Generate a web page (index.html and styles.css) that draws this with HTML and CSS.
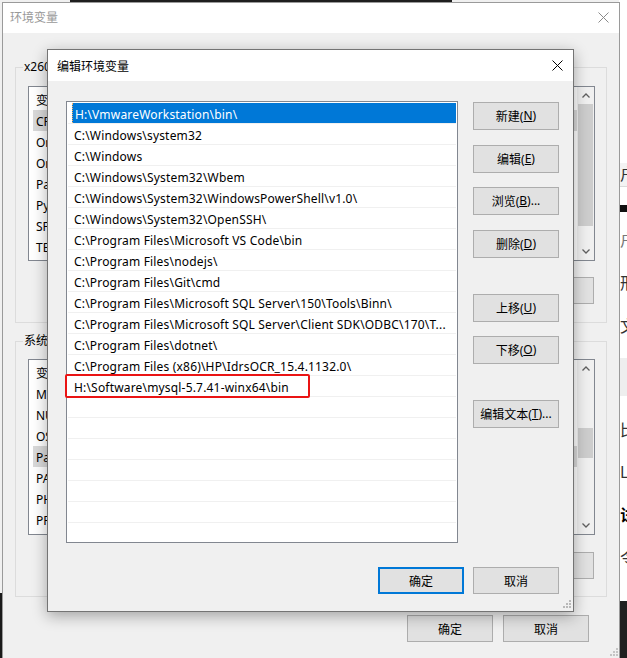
FILE: index.html
```html
<!DOCTYPE html>
<html lang="zh-CN">
<head>
<meta charset="utf-8">
<title>编辑环境变量</title>
<link rel="stylesheet" href="styles.css">
</head>
<body>
<div class="desktop">
  <div class="topline"></div>
  <div class="leftdark"></div>

  <div class="bgwin">
    <div class="bg-gap h163"></div>
    <div class="bg-band"><span class="frag">户</span></div>
    <div class="bg-gap h18"></div>
    <div class="bg-black"></div>
    <div class="bg-gap h7"></div>
    <div class="bg-row gray"><span class="frag">户</span></div>
    <div class="bg-row"><span class="frag">刑</span></div>
    <div class="bg-row"><span class="frag">文</span></div>
    <div class="bg-gap h10"></div>
    <div class="bg-gray"></div>
    <div class="bg-gap h13"></div>
    <div class="bg-row r42"><span class="frag">比</span></div>
    <div class="bg-row r42"><span class="frag">L</span></div>
    <div class="bg-row r44"><span class="frag bold">试</span></div>
    <div class="bg-row r42"><span class="frag">令</span></div>
    <div class="bg-gap h22"></div>
    <div class="bg-dark"></div>
  </div>

  <div class="win outer">
    <div class="o-title">
      <span>环境变量</span>
      <svg class="x" width="11" height="11" viewBox="0 0 11 11"><path d="M0.5 0.5L10.5 10.5M10.5 0.5L0.5 10.5" stroke="#8a8a8a" stroke-width="1"/></svg>
    </div>
    <div class="o-body">
      <div class="group">
        <div class="glabel">x2601 的用户变量(U)</div>
        <div class="olist">
          <div class="olist-rows">
            <div class="orow">变量</div>
            <div class="orow sel">CFLAGS</div>
            <div class="orow">OneDrive</div>
            <div class="orow">OneDriveConsumer</div>
            <div class="orow">Path</div>
            <div class="orow">PyCharm</div>
            <div class="orow">SF_HOME</div>
            <div class="orow">TEMP</div>
          </div>
          <div class="sb">
            <div class="sb-btn"><svg width="8" height="5" viewBox="0 0 8 5"><path d="M0.5 4.5L4 1L7.5 4.5" fill="none" stroke="#606060" stroke-width="1.3"/></svg></div>
            <div class="sb-track"><div class="thumb t1"></div></div>
            <div class="sb-btn"><svg width="8" height="5" viewBox="0 0 8 5"><path d="M0.5 0.5L4 4L7.5 0.5" fill="none" stroke="#606060" stroke-width="1.3"/></svg></div>
          </div>
        </div>
        <div class="obtns">
          <div class="btn">新建(<u>N</u>)...</div>
          <div class="btn">编辑(<u>E</u>)...</div>
          <div class="btn">删除(<u>D</u>)</div>
        </div>
      </div>

      <div class="group g2">
        <div class="glabel">系统变量(S)</div>
        <div class="olist l2">
          <div class="olist-rows">
            <div class="orow">变量</div>
            <div class="orow">MYSQL_HOME</div>
            <div class="orow">NUMBER_OF_PROCESSORS</div>
            <div class="orow">OS</div>
            <div class="orow sel">Path</div>
            <div class="orow">PATHEXT</div>
            <div class="orow">PHP_HOME</div>
            <div class="orow">PROCESSOR_ARCHITECTURE</div>
          </div>
          <div class="sb">
            <div class="sb-btn"><svg width="8" height="5" viewBox="0 0 8 5"><path d="M0.5 4.5L4 1L7.5 4.5" fill="none" stroke="#606060" stroke-width="1.3"/></svg></div>
            <div class="sb-track"><div class="thumb t2"></div></div>
            <div class="sb-btn"><svg width="8" height="5" viewBox="0 0 8 5"><path d="M0.5 0.5L4 4L7.5 0.5" fill="none" stroke="#606060" stroke-width="1.3"/></svg></div>
          </div>
        </div>
        <div class="obtns b2">
          <div class="btn">新建(<u>W</u>)...</div>
          <div class="btn">编辑(<u>I</u>)...</div>
          <div class="btn">删除(<u>L</u>)</div>
        </div>
      </div>

      <div class="ofooter">
        <div class="btn">确定</div>
        <div class="btn">取消</div>
      </div>
    </div>
    <svg class="grip ogrip" width="8" height="8" viewBox="0 0 8 8"><g fill="#c4c4c4"><rect x="6" y="0" width="2" height="2"/><rect x="3" y="3" width="2" height="2"/><rect x="6" y="3" width="2" height="2"/><rect x="0" y="6" width="2" height="2"/><rect x="3" y="6" width="2" height="2"/><rect x="6" y="6" width="2" height="2"/></g></svg>
  </div>

  <div class="win inner">
    <div class="i-title">
      <span>编辑环境变量</span>
      <svg class="x" width="11" height="11" viewBox="0 0 11 11"><path d="M0.5 0.5L10.5 10.5M10.5 0.5L0.5 10.5" stroke="#000" stroke-width="1"/></svg>
    </div>
    <div class="i-body">
      <div class="plist">
        <div class="prow sel"><span class="focus">H:\VmwareWorkstation\bin\</span></div>
        <div class="prow">C:\Windows\system32</div>
        <div class="prow">C:\Windows</div>
        <div class="prow">C:\Windows\System32\Wbem</div>
        <div class="prow">C:\Windows\System32\WindowsPowerShell\v1.0\</div>
        <div class="prow">C:\Windows\System32\OpenSSH\</div>
        <div class="prow">C:\Program Files\Microsoft VS Code\bin</div>
        <div class="prow">C:\Program Files\nodejs\</div>
        <div class="prow">C:\Program Files\Git\cmd</div>
        <div class="prow">C:\Program Files\Microsoft SQL Server\150\Tools\Binn\</div>
        <div class="prow">C:\Program Files\Microsoft SQL Server\Client SDK\ODBC\170\T...</div>
        <div class="prow">C:\Program Files\dotnet\</div>
        <div class="prow">C:\Program Files (x86)\HP\IdrsOCR_15.4.1132.0\</div>
        <div class="prow">H:\Software\mysql-5.7.41-winx64\bin</div>
        <div class="prow"></div>
        <div class="prow"></div>
        <div class="prow"></div>
        <div class="prow"></div>
        <div class="prow"></div>
        <div class="prow"></div>
        <div class="prow"></div>
        <div class="prow"></div>
      </div>
      <div class="side">
        <div class="btn">新建(<u>N</u>)</div>
        <div class="btn m15">编辑(<u>E</u>)</div>
        <div class="btn m14">浏览(<u>B</u>)...</div>
        <div class="btn m15">删除(<u>D</u>)</div>
        <div class="btn m36">上移(<u>U</u>)</div>
        <div class="btn m14">下移(<u>O</u>)</div>
        <div class="btn m36">编辑文本(<u>T</u>)...</div>
      </div>
    </div>
    <div class="i-footer">
      <div class="btn default">确定</div>
      <div class="btn">取消</div>
    </div>
    <svg class="grip igrip" width="8" height="8" viewBox="0 0 8 8"><g fill="#b8b8b8"><rect x="6" y="0" width="2" height="2"/><rect x="3" y="3" width="2" height="2"/><rect x="6" y="3" width="2" height="2"/><rect x="0" y="6" width="2" height="2"/><rect x="3" y="6" width="2" height="2"/><rect x="6" y="6" width="2" height="2"/></g></svg>
  </div>

  <div class="mark"></div>
</div>
</body>
</html>
```

FILE: styles.css
```css
* { box-sizing: border-box; }
body {
  margin: 0;
  font-family: "Noto Sans", "Noto Sans CJK SC", sans-serif;
  font-size: 12px;
  color: #000;
}
u { text-decoration: underline; text-underline-offset: 1px; }

.desktop {
  position: relative;
  width: 627px;
  height: 658px;
  overflow: hidden;
  background: #f0f0f0;
}
.topline {
  position: absolute;
  left: 70px;
  top: 0;
  width: 382px;
  height: 2px;
  background: #1e1e1e;
}
.leftdark {
  position: absolute;
  left: 0;
  top: 593px;
  width: 2px;
  height: 65px;
  background: #1a1a1a;
}

/* background window fragment at the right edge */
.bgwin {
  position: absolute;
  left: 619px;
  top: 0;
  width: 40px;
  height: 658px;
  background: #fff;
  display: flex;
  flex-direction: column;
}
.bg-gap { flex: none; }
.bg-gap.h163 { height: 163px; }
.bg-gap.h18 { height: 18px; }
.bg-gap.h7 { height: 7px; }
.bg-gap.h10 { height: 10px; }
.bg-gap.h13 { height: 13px; }
.bg-gap.h22 { height: 22px; }
.bg-band {
  flex: none;
  height: 24px;
  background: #f3f3f3;
  border-bottom: 1px solid #dadada;
  line-height: 22px;
}
.bg-black { flex: none; height: 7px; background: #111; }
.bg-dark { flex: 1; background: #202020; }
.bg-row { flex: none; height: 43px; line-height: 43px; }
.bg-row.r42 { height: 42px; line-height: 42px; }
.bg-row.r44 { height: 44px; line-height: 44px; }
.bg-row.gray .frag { color: #777; }
.bg-gray { flex: none; height: 38px; background: #eeeeee; }
.frag { display: block; padding-left: 1px; font-size: 16px; color: #333; }
.frag.bold { font-weight: 700; color: #000; }

/* outer window */
.win { position: absolute; }
.outer {
  left: 2px;
  top: 2px;
  width: 618px;
  height: 670px;
  border: 1px solid #9a9a9a;
  background: #f0f0f0;
}
.o-title {
  height: 30px;
  background: #fff;
  display: flex;
  justify-content: space-between;
  align-items: center;
  padding: 0 10px 2px 7px;
  color: #999;
}
.o-body { padding: 34px 12px 0 12px; }

.group {
  border: 1px solid #dcdcdc;
  padding: 0 11px 18px 12px;
}
.group.g2 { margin-top: 18px; padding-bottom: 17px; }
.glabel {
  display: table;
  margin: -9px 0 0 -5px;
  padding: 0 1px;
  background: #f0f0f0;
  line-height: 16px;
}
.olist {
  margin-top: 11px;
  height: 175px;
  border: 1px solid #828790;
  background: #fff;
  display: flex;
}
.olist.l2 { margin-top: 10px; height: 176px; }
.olist-rows { flex: 1; padding-top: 2px; overflow: hidden; }
.orow {
  height: 21px;
  line-height: 23px;
  margin-left: 4px;
  padding-left: 3px;
  white-space: nowrap;
  overflow: hidden;
}
.orow.sel { background: #d9d9d9; }

.sb {
  width: 17px;
  background: #f0f0f0;
  display: flex;
  flex-direction: column;
}
.sb-btn {
  height: 17px;
  display: flex;
  align-items: center;
  justify-content: center;
}
.sb-track { flex: 1; }
.thumb { margin: 0 1px; background: #cdcdcd; }
.thumb.t1 { height: 122px; }
.thumb.t2 { margin-top: 51px; height: 30px; }

.obtns {
  display: flex;
  justify-content: flex-end;
  gap: 10px;
  margin-top: 16px;
  padding-right: 1px;
}
.obtns.b2 { margin-top: 17px; }
.ofooter {
  display: flex;
  justify-content: flex-end;
  gap: 10px;
  margin: 18px 18px 0 0;
}

.btn {
  width: 86px;
  height: 27px;
  border: 1px solid #adadad;
  background: #e1e1e1;
  display: flex;
  align-items: center;
  justify-content: center;
  white-space: nowrap;
  font-size: 12px;
  padding-top: 1px;
}
.btn.default { border: 2px solid #0078d7; }

.grip { position: absolute; }
.ogrip { right: 1px; top: 645px; }
.igrip { right: 2px; bottom: 3px; }

/* inner dialog */
.inner {
  left: 47px;
  top: 49px;
  width: 527px;
  height: 563px;
  border: 1px solid #747474;
  background: #f0f0f0;
  box-shadow: 0 4px 14px rgba(0, 0, 0, 0.32);
}
.i-title {
  height: 31px;
  background: #fff;
  display: flex;
  justify-content: space-between;
  align-items: center;
  padding: 0 10px 0 9px;
}
.i-body {
  display: flex;
  gap: 15px;
  padding: 20px 14px 0 18px;
}
.plist {
  width: 392px;
  height: 442px;
  border: 1px solid #828790;
  background: #fff;
  padding: 1px 1px 0 1px;
  overflow: hidden;
  letter-spacing: 0.18px;
}
.prow {
  height: 21px;
  border-bottom: 1px solid #f0f0f0;
  line-height: 24px;
  padding-left: 6px;
  white-space: nowrap;
  overflow: hidden;
}
.prow.sel {
  background: linear-gradient(90deg, transparent 4px, #0078d7 4px);
  color: #fff;
  padding-left: 4px;
}
.focus {
  display: block;
  height: 20px;
  padding-left: 2px;
  border-left: 1px dotted #f7b36b;
}
.side {
  width: 86px;
  display: flex;
  flex-direction: column;
  padding-top: 1px;
}
.side .btn { height: 28px; padding-top: 0; padding-bottom: 1px; }
.side .m14 { margin-top: 14px; }
.side .m15 { margin-top: 15px; }
.side .m36 { margin-top: 36px; }
.i-footer {
  display: flex;
  justify-content: flex-end;
  gap: 9px;
  padding: 24px 14px 0 0;
}

.mark {
  position: absolute;
  left: 65px;
  top: 374px;
  width: 245px;
  height: 24px;
  border: 2px solid #ea1414;
  border-radius: 2px;
}
```
